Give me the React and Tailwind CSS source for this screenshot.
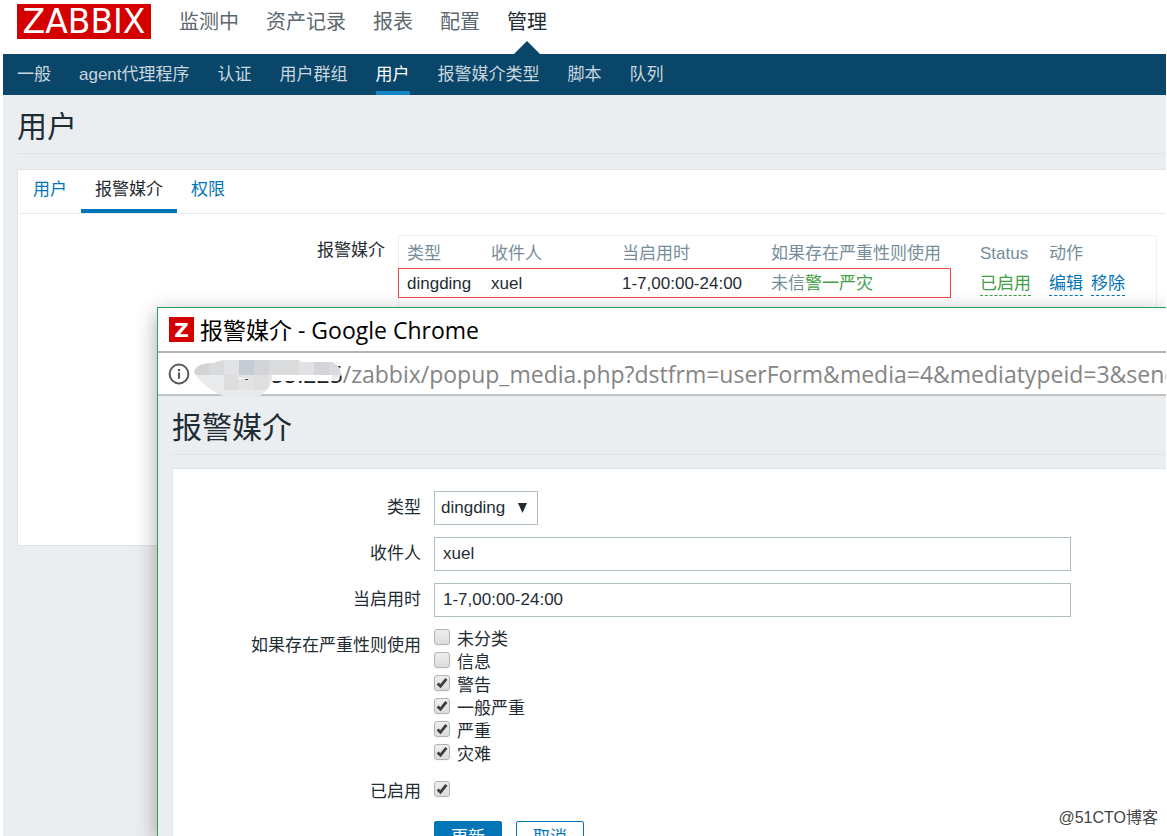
import React, { useState } from 'react';
import clsx from 'clsx';

const mainMenu = ['监测中', '资产记录', '报表', '配置', '管理'];
const subMenu = ['一般', 'agent代理程序', '认证', '用户群组', '用户', '报警媒介类型', '脚本', '队列'];
const tabs = ['用户', '报警媒介', '权限'];

const severities = [
  { id: 'sev0', name: '未分类', on: false },
  { id: 'sev1', name: '信息', on: false },
  { id: 'sev2', name: '警告', on: true },
  { id: 'sev3', name: '一般严重', on: true },
  { id: 'sev4', name: '严重', on: true },
  { id: 'sev5', name: '灾难', on: true },
];

// x, width, colour of the blocks that hide the host name
const mosaic = [
  [0, 15, '#d3d4d6'], [15, 15, '#d8dadc'], [30, 15, '#e2e3e4'], [45, 15, '#c5ccd6'],
  [60, 15, '#d2d4d7'], [75, 30, '#dadbdd'], [105, 15, '#e2e2e4'], [120, 15, '#d3d5d8'],
  [135, 13, '#d9dbde'],
];

const Header = () => (
  <header className="flex h-[54px] items-start pl-[14px]">
    <a href="#home" className="mt-1 flex h-[35px] w-[134px] items-center justify-center bg-[#d40000] font-['DejaVu_Sans'] text-[33px] leading-none text-white">
      ZABBIX
    </a>
    <nav className="ml-7 flex gap-[27px] text-[20px]">
      {mainMenu.map((item) => (
        <a
          key={item}
          href="#menu"
          className={clsx('relative flex h-[54px] pt-[6px] leading-8', item === '管理' ? 'text-[#1f2c33]' : 'text-[#5c676e]')}
        >
          {item}
          {item === '管理' && (
            <svg className="absolute bottom-0 left-1/2 -translate-x-1/2" width="26" height="13" viewBox="0 0 26 13">
              <path d="M0 13 13 0l13 13z" fill="#0a466a" />
            </svg>
          )}
        </a>
      ))}
    </nav>
  </header>
);

const SubMenu = () => (
  <nav className="flex h-[41px] gap-7 bg-[#0a466a] pl-[14px]">
    {subMenu.map((item) => (
      <a
        key={item}
        href="#sub"
        className={clsx(
          'h-[41px] border-b-4 leading-[42px]',
          item === '用户' ? 'border-[#1484c6] text-white' : 'border-transparent text-[#c8d6df]'
        )}
      >
        {item}
      </a>
    ))}
  </nav>
);

const PageTitle = ({ children }) => (
  <h1 className="h-[59px] border-b border-[#dfe4e7] text-[30px] leading-[64px] text-[#1f2c33]">{children}</h1>
);

const MediaTable = () => (
  <div className="relative mr-[9px] grow border border-[#eef0f2] pb-10">
    <table className="w-full table-fixed text-left">
      <colgroup>
        <col className="w-[84px]" />
        <col className="w-[131px]" />
        <col className="w-[149px]" />
        <col className="w-[209px]" />
        <col className="w-[69px]" />
        <col />
      </colgroup>
      <thead className="text-[#768d99]">
        <tr className="h-[34px]">
          <th className="pl-2 pt-[2px] font-normal">类型</th>
          <th className="pl-2 pt-[2px] font-normal">收件人</th>
          <th className="pl-2 pt-[2px] font-normal">当启用时</th>
          <th className="pl-2 pt-[2px] font-normal">如果存在严重性则使用</th>
          <th className="pl-2 pt-[2px] font-normal">Status</th>
          <th className="pl-2 pt-[2px] font-normal">动作</th>
        </tr>
      </thead>
      <tbody>
        <tr className="h-7">
          <td className="pl-2">dingding</td>
          <td className="pl-2">xuel</td>
          <td className="pl-2">1-7,00:00-24:00</td>
          <td className="pl-2">
            <span className="text-[#768d99]">未信</span>
            <span className="text-[#429e47]">警一严灾</span>
          </td>
          <td className="pl-2">
            <a href="#status" className="inline-block border-b border-dashed border-[#429e47] leading-[22px] text-[#429e47]">已启用</a>
          </td>
          <td className="pl-2">
            <span className="flex gap-2 text-[#0275b8]">
              <a href="#edit" className="border-b border-dashed border-[#0275b8] leading-[22px]">编辑</a>
              <a href="#remove" className="border-b border-dashed border-[#0275b8] leading-[22px]">移除</a>
            </span>
          </td>
        </tr>
      </tbody>
    </table>
    <div className="absolute -left-px top-8 h-[30px] w-[553px] border border-[#f04848]" />
  </div>
);

const Checkbox = ({ id, checked, onChange }) => (
  <span className="grid size-4 shrink-0 place-items-center">
    <input
      id={id}
      type="checkbox"
      checked={checked}
      onChange={onChange}
      className="col-start-1 row-start-1 size-4 appearance-none rounded-[3px] border border-[#b4b4b4] bg-linear-to-b from-[#eeeeee] to-[#dcdcdc] shadow-xs"
    />
    {checked && (
      <svg className="pointer-events-none z-10 col-start-1 row-start-1" width="12" height="12" viewBox="0 0 12 12">
        <path d="M1.6 6.4 4.5 9.2 10.4 1.8" fill="none" stroke="#3c3f41" strokeWidth="2.8" />
      </svg>
    )}
  </span>
);

const FormRow = ({ label, htmlFor, children }) => (
  <div className="flex gap-[13px]">
    <label htmlFor={htmlFor} className="h-[34px] w-[248px] shrink-0 text-right leading-[34px]">
      {label}
    </label>
    {children}
  </div>
);

const AddressBar = () => (
  <div className="flex h-[43px] items-center overflow-hidden border-b-2 border-[#c2c2c2] bg-white pl-[10px] whitespace-nowrap">
    <svg width="22" height="22" viewBox="0 0 22 22" className="shrink-0" fill="none" stroke="#5a5a5a">
      <circle cx="11" cy="11" r="9.4" strokeWidth="2" />
      <path d="M11 9.6v6.2M11 6v2.2" strokeWidth="2.2" />
    </svg>
    <span className="ml-[81px] font-['Open_Sans'] text-[23px] leading-[38px] text-[#858585]">
      <span className="text-[#222222]">55.225</span>
      /zabbix/popup_media.php?dstfrm=userForm&amp;media=4&amp;mediatypeid=3&amp;send
    </span>
  </div>
);

const Mosaic = () => (
  <svg className="absolute left-[36px] top-[52px]" width="148" height="38" viewBox="0 0 148 38">
    <clipPath id="smudge">
      <path d="M0 12Q2 3 20 3Q26 0 34 0H104L108 2H138Q147 6 147 14V15Q143 20 137 21H78Q74 30 68 34L64 38H34Q8 28 0 12z" />
    </clipPath>
    <g clipPath="url(#smudge)">
      <rect width="148" height="38" fill="#e9eaeb" />
      {mosaic.map(([x, w, fill]) => (
        <rect key={x} x={x} width={w} height={15} fill={fill} />
      ))}
      <rect x="30" y="15" width="15" height="15" fill="#dddddc" />
      <rect x="45" y="15" width="15" height="15" fill="#e3e3e3" />
      <rect x="60" y="15" width="15" height="15" fill="#dfdfde" />
      <rect x="78" y="15" width="60" height="6" fill="#ffffff" />
      <rect x="44" y="18" width="9" height="1" fill="#ffffff" />
      <rect x="51" y="19" width="3" height="1" fill="#444444" />
    </g>
  </svg>
);

const PopupWindow = () => {
  const [sendTo, setSendTo] = useState('xuel');
  const [period, setPeriod] = useState('1-7,00:00-24:00');
  const [checked, setChecked] = useState(severities.map((s) => s.on));
  const [enabled, setEnabled] = useState(true);

  const toggle = (index) => setChecked(checked.map((c, i) => (i === index ? !c : c)));

  return (
    <section className="absolute bottom-0 left-[154px] right-0 top-[307px] overflow-hidden border-l border-t border-[#2f9e60] bg-[#ebeef0] shadow-[0_6px_20px_rgba(0,0,0,0.35)]">
      <div className="flex h-[45px] items-center gap-[6px] border-b-2 border-[#b4b4b4] bg-white pl-[11px] text-black">
        <span className="flex size-[25px] items-center justify-center bg-[#d40000] font-['DejaVu_Sans'] text-[20px] font-bold leading-none text-white">Z</span>
        <span className="font-['Open_Sans','Noto_Sans_CJK_SC',sans-serif] text-[23px] leading-[38px]">报警媒介 - Google Chrome</span>
      </div>
      <AddressBar />
      <Mosaic />
      <div className="pl-[14px]">
        <PageTitle>报警媒介</PageTitle>
        <form className="mt-[13px] flex flex-col gap-3 border-l border-t border-[#dfe4e7] bg-white pb-10 pt-[22px]" onSubmit={(e) => e.preventDefault()}>
          <FormRow label="类型" htmlFor="type">
            <div className="relative">
              <select id="type" className="h-[34px] w-[104px] appearance-none border border-[#b0bec5] bg-white pl-[6px] text-[#1f2c33]">
                <option>dingding</option>
              </select>
              <svg className="pointer-events-none absolute right-[11px] top-[12px]" width="9" height="10" viewBox="0 0 9 10">
                <path d="M0 0h9L4.5 10z" fill="#1f2c33" />
              </svg>
            </div>
          </FormRow>
          <FormRow label="收件人" htmlFor="sendto">
            <input id="sendto" type="text" value={sendTo} onChange={(e) => setSendTo(e.target.value)} className="mr-[95px] h-[34px] grow border border-[#b0bec5] px-2" />
          </FormRow>
          <FormRow label="当启用时" htmlFor="period">
            <input id="period" type="text" value={period} onChange={(e) => setPeriod(e.target.value)} className="mr-[95px] h-[34px] grow border border-[#b0bec5] px-2" />
          </FormRow>
          <FormRow label="如果存在严重性则使用" htmlFor="sev0">
            <ul className="-mb-1">
              {severities.map((s, i) => (
                <li key={s.id} className="flex h-[23px] items-start gap-[7px]">
                  <Checkbox id={s.id} checked={checked[i]} onChange={() => toggle(i)} />
                  <label htmlFor={s.id}>{s.name}</label>
                </li>
              ))}
            </ul>
          </FormRow>
          <FormRow label="已启用" htmlFor="enabled">
            <span className="flex h-7 items-center">
              <Checkbox id="enabled" checked={enabled} onChange={() => setEnabled(!enabled)} />
            </span>
          </FormRow>
          <div className="flex gap-[14px] pl-[261px]">
            <button type="submit" className="h-[34px] w-[68px] rounded-xs border border-[#0275b8] bg-[#0275b8] text-white">更新</button>
            <button type="button" className="h-[34px] w-[68px] rounded-xs border border-[#0275b8] bg-white text-[#0275b8]">取消</button>
          </div>
        </form>
      </div>
    </section>
  );
};

const App = () => {
  const [tab, setTab] = useState('报警媒介');

  return (
    <div className="h-screen bg-white pl-[3px] pr-px font-['Liberation_Sans','Noto_Sans_CJK_SC',sans-serif] text-[17px] leading-[22px] text-[#1f2c33]">
      <div className="relative flex h-full flex-col overflow-hidden">
        <Header />
        <SubMenu />
        <main className="grow bg-[#ebeef0] pl-[14px]">
          <PageTitle>用户</PageTitle>
          <div className="mt-[15px] h-[377px] border border-r-0 border-[#dfe4e7] bg-white">
            <div className="flex h-[44px] border-b border-[#e6eaec] pl-px">
              {tabs.map((t) => (
                <button
                  key={t}
                  type="button"
                  onClick={() => setTab(t)}
                  className={clsx(
                    'h-[43px] border-b-4 px-[14px] pt-px',
                    t === tab ? 'border-[#0275b8] text-[#1f2c33]' : 'border-transparent text-[#0275b8]'
                  )}
                >
                  {t}
                </button>
              ))}
            </div>
            <div className="flex gap-[13px] pt-[21px]">
              <span className="w-[367px] shrink-0 pt-[5px] text-right">报警媒介</span>
              <MediaTable />
            </div>
          </div>
        </main>
        <PopupWindow />
        <p className="absolute bottom-[7px] right-2 text-[16px] text-[#444444]">@51CTO博客</p>
      </div>
    </div>
  );
};

export default App;
